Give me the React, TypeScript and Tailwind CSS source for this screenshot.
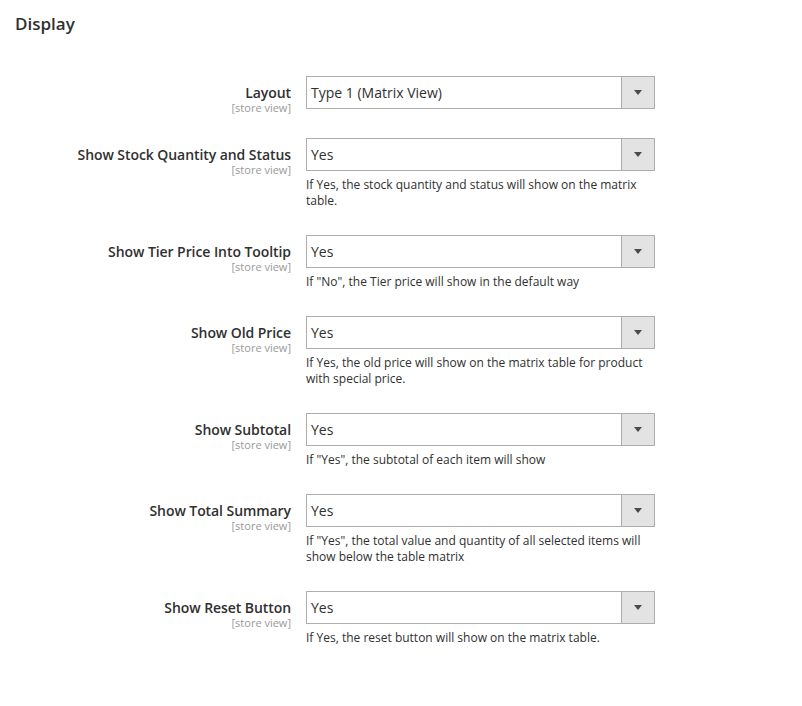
import React from "react";

type Field = {
  label: string;
  value: string;
  note?: string;
};

const fields: Field[] = [
  { label: "Layout", value: "Type 1 (Matrix View)" },
  {
    label: "Show Stock Quantity and Status",
    value: "Yes",
    note: "If Yes, the stock quantity and status will show on the matrix table.",
  },
  {
    label: "Show Tier Price Into Tooltip",
    value: "Yes",
    note: 'If "No", the Tier price will show in the default way',
  },
  {
    label: "Show Old Price",
    value: "Yes",
    note: "If Yes, the old price will show on the matrix table for product with special price.",
  },
  {
    label: "Show Subtotal",
    value: "Yes",
    note: 'If "Yes", the subtotal of each item will show',
  },
  {
    label: "Show Total Summary",
    value: "Yes",
    note: 'If "Yes", the total value and quantity of all selected items will show below the table matrix',
  },
  {
    label: "Show Reset Button",
    value: "Yes",
    note: "If Yes, the reset button will show on the matrix table.",
  },
];

const SelectBox = ({ value }: { value: string }) => (
  <div className="flex h-[33px] w-[349px] border border-[#adadad] bg-white">
    <div className="flex flex-1 items-center pl-[4px] text-[14px] text-[#303030]">{value}</div>
    <div className="flex w-[33px] items-center justify-center border-l border-[#adadad] bg-[#e3e3e3]">
      <svg width="8" height="5" viewBox="0 0 8 5">
        <path d="M0 0h8L4 5z" fill="#514943" />
      </svg>
    </div>
  </div>
);

const Row = ({ field }: { field: Field }) => (
  <div className="flex items-start mb-[26px]">
    <div className="h-[33px] w-[291px] shrink-0 pt-[9px] text-right">
      <div className="text-[14px] font-semibold leading-[16px] tracking-[-0.07px] text-[#303030]">
        {field.label}
      </div>
      <div className="mt-[1px] text-[11px] leading-[12px] text-[#999]">[store view]</div>
    </div>
    <div className="ml-[15px] min-h-[36px] w-[349px]">
      <SelectBox value={field.value} />
      {field.note && (
        <div className="mt-[6px] text-[12px] leading-[16px] text-[#303030]">{field.note}</div>
      )}
    </div>
  </div>
);

export default function App() {
  return (
    <div className="min-h-[706px] w-[802px] bg-white font-['Open_Sans',sans-serif]">
      <h2 className="px-[15px] pt-[12px] text-[17px] font-semibold leading-[23px] text-[#303030]">
        Display
      </h2>
      <div className="pt-[41px]">
        {fields.map((f) => (
          <Row key={f.label} field={f} />
        ))}
      </div>
    </div>
  );
}
